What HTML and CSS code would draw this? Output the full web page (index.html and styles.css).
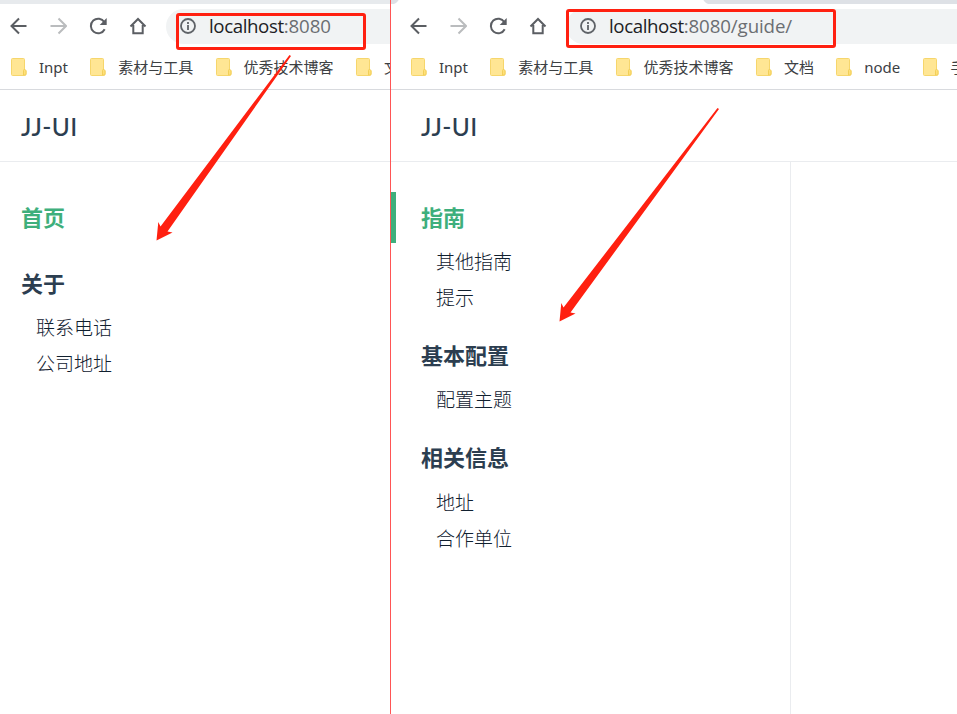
FILE: index.html
```
<!DOCTYPE html>
<html lang="zh-CN">
<head>
<meta charset="utf-8">
<title>JJ-UI</title>
<link rel="stylesheet" href="styles.css">
</head>
<body>
<svg class="defs" width="0" height="0" aria-hidden="true">
  <symbol id="back" viewBox="0 0 18 18"><path d="M17.500 9H2.500M10 1.500 2.500 9 10 16.500" fill="none" stroke="currentColor" stroke-width="2"/></symbol>
  <symbol id="forward" viewBox="0 0 18 18"><path d="M1.500 9h15M9.500 1.500 17 9 9.500 16.500" fill="none" stroke="currentColor" stroke-width="2"/></symbol>
  <symbol id="reload" viewBox="0 0 18 18"><path d="M15.400 5.200A7.300 7.300 0 1 0 15.700 12.300" fill="none" stroke="currentColor" stroke-width="2"/><path d="M17.700 1v7h-7z" fill="currentColor"/></symbol>
  <symbol id="home" viewBox="0 0 18 18"><path d="M1.500 9.500 9 2l7.500 7.500M4.300 8v8.200h9.400V8" fill="none" stroke="currentColor" stroke-width="2"/></symbol>
  <symbol id="info" viewBox="0 0 16 16"><circle cx="8" cy="8" r="7" fill="none" stroke="currentColor" stroke-width="1.800"/><path d="M8 7v5M8 4v2" stroke="currentColor" stroke-width="1.800"/></symbol>
  <symbol id="folder" viewBox="0 0 16 18"><path d="M.5 1.500q0-1 1-1h11q1 0 1 1v10.500l1.500 1v3q0 1.500-1.500 1.500h-12q-1 0-1-1z" fill="#ffe694" stroke="#f6d66c"/><path d="M12.500 17v-4.500q0-1 1-1t1.500 1V16q0 1-1 1z" fill="#ffe07a" stroke="#f2cf58"/></symbol>
</svg>
<div class="screen">
  <section class="pane pane-left">
    <div class="tabs"></div>
    <div class="toolbar">
      <svg class="nav"><use href="#back"/></svg>
      <svg class="nav off"><use href="#forward"/></svg>
      <svg class="nav"><use href="#reload"/></svg>
      <svg class="nav"><use href="#home"/></svg>
      <div class="address"><svg class="info"><use href="#info"/></svg><span class="url">localhost<span class="rest">:8080</span></span></div>
    </div>
    <div class="bookmarks">
      <div class="mark"><svg><use href="#folder"/></svg><span>Inpt</span></div>
      <div class="mark"><svg><use href="#folder"/></svg><span>素材与工具</span></div>
      <div class="mark"><svg><use href="#folder"/></svg><span>优秀技术博客</span></div>
      <div class="mark"><svg><use href="#folder"/></svg><span>文档</span></div>
    </div>
    <header class="brand">JJ-UI</header>
    <nav class="sidebar">
      <div class="group"><h2 class="active">首页</h2></div>
      <div class="group"><h2>关于</h2><a>联系电话</a><a>公司地址</a></div>
    </nav>
  </section>
  <section class="pane pane-right">
    <div class="tabs"></div>
    <div class="toolbar">
      <svg class="nav"><use href="#back"/></svg>
      <svg class="nav off"><use href="#forward"/></svg>
      <svg class="nav"><use href="#reload"/></svg>
      <svg class="nav"><use href="#home"/></svg>
      <div class="address"><svg class="info"><use href="#info"/></svg><span class="url">localhost<span class="rest">:8080/guide/</span></span></div>
    </div>
    <div class="bookmarks">
      <div class="mark"><svg><use href="#folder"/></svg><span>Inpt</span></div>
      <div class="mark"><svg><use href="#folder"/></svg><span>素材与工具</span></div>
      <div class="mark"><svg><use href="#folder"/></svg><span>优秀技术博客</span></div>
      <div class="mark"><svg><use href="#folder"/></svg><span>文档</span></div>
      <div class="mark"><svg><use href="#folder"/></svg><span>node</span></div>
      <div class="mark"><svg><use href="#folder"/></svg><span>手</span></div>
    </div>
    <header class="brand">JJ-UI</header>
    <nav class="sidebar bordered">
      <div class="group"><h2 class="active marked">指南</h2><a>其他指南</a><a>提示</a></div>
      <div class="group"><h2>基本配置</h2><a>配置主题</a></div>
      <div class="group"><h2>相关信息</h2><a>地址</a><a>合作单位</a></div>
    </nav>
  </section>
  <svg class="notes" viewBox="0 0 957 714">
    <g fill="none" stroke="#ff2010" stroke-width="3">
      <rect x="177.500" y="14.500" width="187" height="34" rx="1.500"/>
      <rect x="567.500" y="10.500" width="267" height="36" rx="1.500"/>
    </g>
    <g fill="#ff2010">
      <path d="M289.500 55 291 56 167.500 231.500 172.500 232.500 156.500 240.500 158.300 222 160.500 226.500z"/>
      <path d="M717.500 108 719 109 570.500 312.500 575.500 313.500 559.500 321.500 561.300 303 563.500 307.500z"/>
    </g>
  </svg>
</div>
</body>
</html>
```
FILE: styles.css
```
* { box-sizing: border-box; }
body {
  margin: 0;
  background: #fff;
  color: #2c3e50;
  font-family: "Noto Sans", "Noto Sans CJK SC", sans-serif;
}
.defs { position: absolute; }
.screen {
  position: relative;
  display: flex;
  width: 957px;
  height: 714px;
  overflow: hidden;
}
.pane { display: flex; flex-direction: column; overflow: hidden; --inset: 0px; }
.pane-left { width: 391px; flex: none; border-right: 1px solid #ff5555; }
.pane-right { flex: 1; --inset: 9px; }
.tabs { height: 4px; flex: none; background: #e7eaed; }
.pane-right .tabs {
  background:
    radial-gradient(circle at 0 -4px, #dee1e6 8px, transparent 9px),
    radial-gradient(circle at 320px -4px, #dee1e6 8px, #fff 9px) no-repeat 0 0 / 320px 4px,
    #dee1e6;
}
.toolbar {
  display: flex;
  align-items: center;
  gap: 22px;
  height: 45px;
  flex: none;
  padding: 0 0 1px calc(9px + var(--inset));
}
.nav { width: 18px; height: 18px; flex: none; color: #5b5e63; }
.off { color: #babcbe; }
.address {
  display: flex;
  align-items: center;
  gap: 13px;
  flex: 1;
  height: 35px;
  margin: 1px 0 0 -3px;
  padding: 0 0 1px 14px;
  border-radius: 18px 0 0 18px;
  background: #f1f3f4;
}
.info { width: 16px; height: 16px; flex: none; color: #5f6368; }
.url { font: 18.700px/34px "Open Sans", sans-serif; color: #202124; white-space: nowrap; letter-spacing: -.4px; }
.rest { color: #6b6e72; letter-spacing: -.1px; }
.bookmarks {
  display: flex;
  align-items: center;
  gap: 22.300px;
  height: 41px;
  flex: none;
  padding: 0 0 4px calc(11px + var(--inset));
  border-bottom: 1px solid #d8dade;
  color: #3c4043;
  font-size: 15px;
  line-height: 20px;
}
.mark { display: flex; align-items: center; gap: 12px; flex: none; white-space: nowrap; }
.mark svg { width: 16px; height: 18px; }
.brand {
  height: 72px;
  flex: none;
  padding-left: calc(21px + var(--inset));
  border-bottom: 1px solid #eaecef;
  font-family: Lato, sans-serif;
  font-size: 24.500px;
  font-weight: 500;
  letter-spacing: .4px;
  line-height: 73px;
}
.sidebar {
  display: flex;
  flex-direction: column;
  gap: 15px;
  flex: 1;
  padding-top: 30px;
}
.bordered { width: 400px; border-right: 1px solid #eaecef; }
.group { display: flex; flex-direction: column; }
.group h2 {
  height: 51.200px;
  margin: 0;
  padding-left: calc(21px + var(--inset));
  font-size: 22px;
  line-height: 51px;
  font-weight: 700;
}
.group a {
  height: 36px;
  padding-left: calc(36px + var(--inset));
  font-size: 19px;
  line-height: 38px;
  font-weight: 300;
  color: #10202f;
}
.group .active { color: #3eaf7c; }
.group .marked { padding-left: 25px; border-left: 5px solid #3eaf7c; }
.notes { position: absolute; inset: 0; width: 957px; height: 714px; pointer-events: none; }
```
